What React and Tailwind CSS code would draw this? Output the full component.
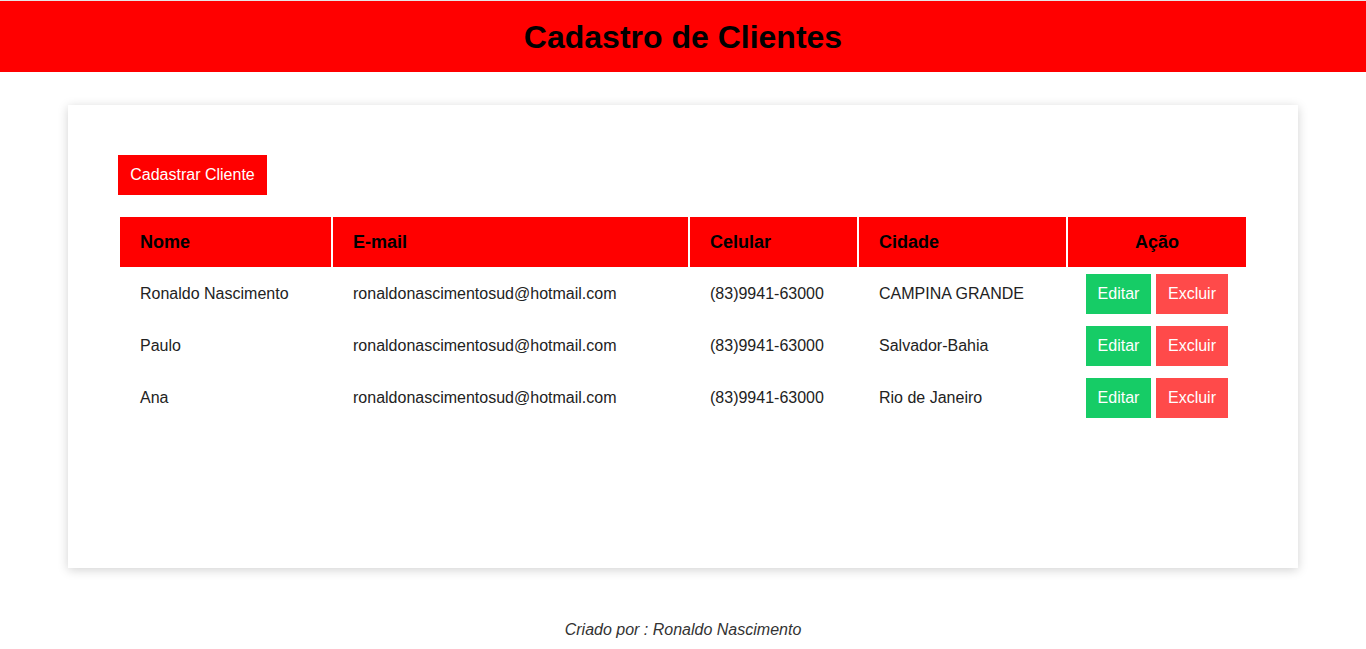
export default function App() {
  const rows = [
    ["Ronaldo Nascimento", "ronaldonascimentosud@hotmail.com", "(83)9941-63000", "CAMPINA GRANDE"],
    ["Paulo", "ronaldonascimentosud@hotmail.com", "(83)9941-63000", "Salvador-Bahia"],
    ["Ana", "ronaldonascimentosud@hotmail.com", "(83)9941-63000", "Rio de Janeiro"],
  ];
  return (
    <div className="min-h-[649px] bg-white" style={{ fontFamily: '"Liberation Sans", Arial, sans-serif' }}>
      <header className="border-t border-[#e6e6e6] bg-[#ff0000] h-[72px] flex items-center justify-center">
        <h1 className="text-[32px] font-bold text-black leading-none">Cadastro de Clientes</h1>
      </header>
      <div className="px-[68px] pt-[33px]">
        <div className="h-[463px] bg-white shadow-[0_2px_10px_rgba(0,0,0,0.18)] px-[50px] pt-[50px]">
          <button className="h-[40px] w-[149px] bg-[#ff0000] text-white text-[16px] leading-none flex items-center justify-center">
            Cadastrar Cliente
          </button>
          <table className="mt-[20px] w-[1130px] table-fixed border-separate border-spacing-[2px]">
            <colgroup>
              <col className="w-[211px]" />
              <col className="w-[355px]" />
              <col className="w-[167px]" />
              <col className="w-[207px]" />
              <col className="w-[178px]" />
            </colgroup>
            <thead>
              <tr className="h-[50px]">
                <th className="bg-[#ff0000] text-left pl-[20px] text-[18px] font-bold text-black">Nome</th>
                <th className="bg-[#ff0000] text-left pl-[20px] text-[18px] font-bold text-black">E-mail</th>
                <th className="bg-[#ff0000] text-left pl-[20px] text-[18px] font-bold text-black">Celular</th>
                <th className="bg-[#ff0000] text-left pl-[20px] text-[18px] font-bold text-black">Cidade</th>
                <th className="bg-[#ff0000] text-center text-[18px] font-bold text-black">Ação</th>
              </tr>
            </thead>
            <tbody>
              {rows.map((r, i) => (
                <tr key={i} className="h-[50px] text-[16px] text-[#222]">
                  <td className="pl-[20px]">{r[0]}</td>
                  <td className="pl-[20px]">{r[1]}</td>
                  <td className="pl-[20px]">{r[2]}</td>
                  <td className="pl-[20px]">{r[3]}</td>
                  <td>
                    <div className="flex justify-center gap-[5px]">
                      <button className="h-[40px] w-[65px] bg-[#16cc66] text-white text-[16px] leading-none">Editar</button>
                      <button className="h-[40px] w-[72px] bg-[#ff4a4a] text-white text-[16px] leading-none">Excluir</button>
                    </div>
                  </td>
                </tr>
              ))}
            </tbody>
          </table>
        </div>
      </div>
      <footer className="mt-[50px] text-center italic text-[16px] text-[#333]">
        Criado por : Ronaldo Nascimento
      </footer>
    </div>
  );
}
